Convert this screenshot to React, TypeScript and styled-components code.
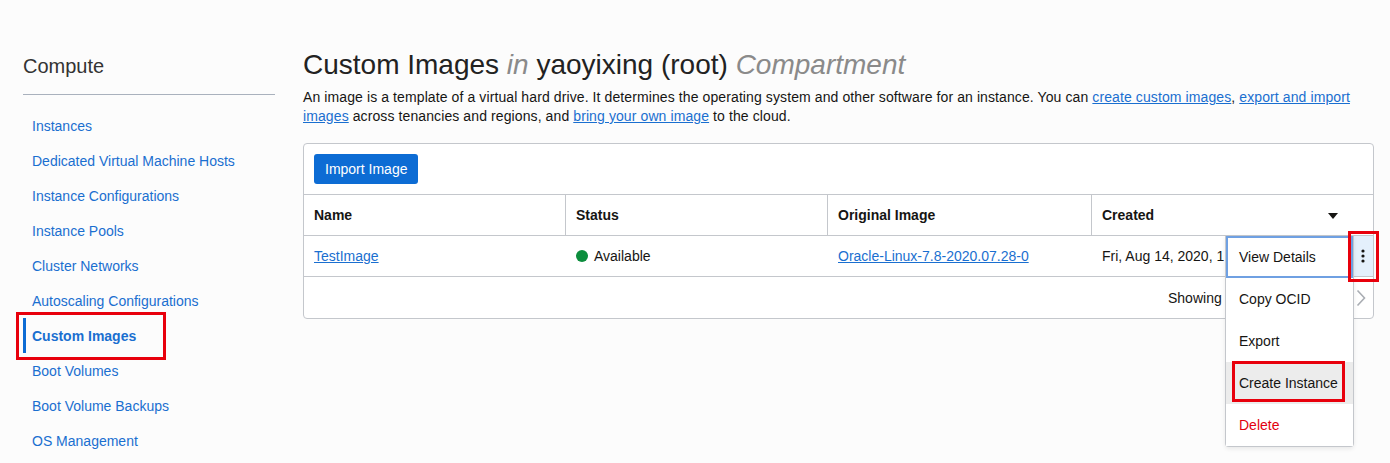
import React from 'react'
import styled, { createGlobalStyle } from 'styled-components'

const GlobalStyle = createGlobalStyle`
  html, body {
    margin: 0;
    padding: 0;
    background: #fcfcfc;
    font-family: "Liberation Sans", Arial, sans-serif;
    color: #161513;
  }
  * { box-sizing: border-box; }
`

const Page = styled.div`
  display: flex;
  width: 1390px;
  height: 463px;
  overflow: hidden;
  padding: 0 16px 0 23px;
`

const Sidebar = styled.nav`
  width: 252px;
  flex-shrink: 0;
  padding-top: 54px;
`

const SideTitle = styled.h2`
  margin: 0;
  font-size: 20px;
  line-height: 24px;
  font-weight: normal;
  color: #333;
  padding-bottom: 16px;
  border-bottom: 1px solid #a9b1bd;
`

const NavList = styled.ul`
  list-style: none;
  margin: 0;
  padding: 13px 0 0;
`

const NavItem = styled.li<{ $active?: boolean }>`
  position: relative;
  height: 35px;
  display: flex;
  align-items: center;
  padding-left: ${(p) => (p.$active ? '6px' : '9px')};
  border-left: ${(p) => (p.$active ? '3px solid #0d6cd4' : 'none')};
  font-size: 14px;
  font-weight: ${(p) => (p.$active ? 'bold' : 'normal')};
  color: #1a6fd0;
`

const Highlight = styled.span<{ $l: number; $t: number; $w: number; $h: number }>`
  position: absolute;
  left: ${(p) => p.$l}px;
  top: ${(p) => p.$t}px;
  width: ${(p) => p.$w}px;
  height: ${(p) => p.$h}px;
  border: 3px solid #e8000c;
  pointer-events: none;
  z-index: 5;
`

const Main = styled.main`
  flex: 1;
  padding-left: 28px;
  padding-top: 48px;
`

const Title = styled.h1`
  margin: 0;
  font-size: 28px;
  line-height: 34px;
  font-weight: normal;
  color: #222;
  white-space: nowrap;

  em {
    color: #8a8a8a;
  }
`

const Description = styled.p`
  margin: 6px 0 0;
  font-size: 14px;
  line-height: 19px;
  color: #161513;
  white-space: nowrap;
  letter-spacing: 0.1px;
`

const Link = styled.a`
  color: #1a6fd0;
  text-decoration: underline;
  cursor: pointer;
`

const Panel = styled.section`
  position: relative;
  margin-top: 17px;
  background: #fff;
  border: 1px solid #c4c7cc;
  border-radius: 4px;
`

const Toolbar = styled.div`
  padding: 10px;
  border-bottom: 1px solid #c4c7cc;
`

const PrimaryButton = styled.button`
  height: 30px;
  padding: 0 11px;
  border: none;
  border-radius: 3px;
  background: #0d6cd4;
  color: #fff;
  font-family: inherit;
  font-size: 14px;
`

const Row = styled.div<{ $header?: boolean }>`
  display: grid;
  grid-template-columns: 262px 262px 264px 1fr;
  height: 41px;
  border-bottom: 1px solid #c4c7cc;
  font-size: 14px;
  font-weight: ${(p) => (p.$header ? 'bold' : 'normal')};
`

const Cell = styled.div<{ $divider?: boolean; $overlay?: boolean }>`
  position: relative;
  display: flex;
  align-items: center;
  padding-left: 10px;
  border-right: ${(p) => (p.$divider ? '1px solid #c4c7cc' : 'none')};
  white-space: nowrap;
  overflow: ${(p) => (p.$overlay ? 'visible' : 'hidden')};
`

const Clipped = styled.span<{ $w: number }>`
  display: inline-block;
  max-width: ${(p) => p.$w}px;
  overflow: hidden;
  white-space: nowrap;
`

const SortArrow = styled.span`
  position: absolute;
  right: 35px;
  top: 18px;
  border-left: 5px solid transparent;
  border-right: 5px solid transparent;
  border-top: 6px solid #161513;
`

const StatusDot = styled.span`
  width: 12px;
  height: 12px;
  border-radius: 50%;
  background: #0c8d3d;
  margin-right: 6px;
`

const KebabButton = styled.button`
  position: absolute;
  right: 0;
  top: 0;
  width: 21px;
  height: 40px;
  border: none;
  background: #e4f0fc;
  display: flex;
  align-items: center;
  justify-content: center;
  padding: 0;
`

const Footer = styled.div`
  display: flex;
  align-items: center;
  height: 41px;
  font-size: 14px;
  padding-left: 864px;
`

const Pager = styled.span`
  display: flex;
  align-items: center;
  margin-left: auto;
  padding-right: 7px;
`

const Menu = styled.ul`
  position: absolute;
  left: 921px;
  top: 92px;
  width: 129px;
  margin: 0;
  padding: 0;
  list-style: none;
  background: #fff;
  border: 1px solid #c4c7cc;
  border-top: none;
  border-radius: 0 0 4px 4px;
  box-shadow: 0 2px 4px rgba(0, 0, 0, 0.08);
  z-index: 4;
`

const MenuItem = styled.li<{ $focused?: boolean; $hover?: boolean; $danger?: boolean }>`
  position: relative;
  height: 42px;
  display: flex;
  align-items: center;
  padding-left: ${(p) => (p.$focused ? '11px' : '13px')};
  font-size: 14px;
  color: ${(p) => (p.$danger ? '#e2000f' : '#161513')};
  background: ${(p) => (p.$hover ? '#ececec' : '#fff')};
  border: ${(p) => (p.$focused ? '2px solid #6fa0e2' : 'none')};
  white-space: nowrap;
`

const navItems = [
  'Instances',
  'Dedicated Virtual Machine Hosts',
  'Instance Configurations',
  'Instance Pools',
  'Cluster Networks',
  'Autoscaling Configurations',
  'Custom Images',
  'Boot Volumes',
  'Boot Volume Backups',
  'OS Management',
]

const Kebab = () => (
  <svg width="4" height="14" viewBox="0 0 4 14">
    <circle cx="2" cy="2" r="1.6" fill="#161513" />
    <circle cx="2" cy="7" r="1.6" fill="#161513" />
    <circle cx="2" cy="12" r="1.6" fill="#161513" />
  </svg>
)

const Chevron = () => (
  <svg width="10" height="18" viewBox="0 0 10 18">
    <path d="M1.5 1.5 L8.5 9 L1.5 16.5" fill="none" stroke="#a9adb3" strokeWidth="1.6" />
  </svg>
)

const App: React.FC = () => {
  return (
    <>
      <GlobalStyle />
      <Page>
        <Sidebar>
          <SideTitle>Compute</SideTitle>
          <NavList>
            {navItems.map((item) => {
              const active = item === 'Custom Images'
              return (
                <NavItem key={item} $active={active}>
                  {item}
                  {active && <Highlight $l={-10} $t={-6} $w={150} $h={48} />}
                </NavItem>
              )
            })}
          </NavList>
        </Sidebar>
        <Main>
          <Title>
            Custom Images <em>in</em> yaoyixing (root) <em>Compartment</em>
          </Title>
          <Description>
            An image is a template of a virtual hard drive. It determines the operating system and other software for an
            instance. You can <Link>create custom images</Link>, <Link>export and import</Link>
            <br />
            <Link>images</Link> across tenancies and regions, and <Link>bring your own image</Link> to the cloud.
          </Description>
          <Panel>
            <Toolbar>
              <PrimaryButton>Import Image</PrimaryButton>
            </Toolbar>
            <Row $header>
              <Cell $divider>Name</Cell>
              <Cell $divider>Status</Cell>
              <Cell $divider>Original Image</Cell>
              <Cell>
                Created
                <SortArrow />
              </Cell>
            </Row>
            <Row>
              <Cell>
                <Link>TestImage</Link>
              </Cell>
              <Cell>
                <StatusDot />
                Available
              </Cell>
              <Cell>
                <Link>Oracle-Linux-7.8-2020.07.28-0</Link>
              </Cell>
              <Cell $overlay>
                <Clipped $w={122}>Fri, Aug 14, 2020, 14:12:36 UTC</Clipped>
                <KebabButton>
                  <Kebab />
                  <Highlight $l={-4} $t={-5} $w={31} $h={51} />
                </KebabButton>
              </Cell>
            </Row>
            <Footer>
              <Clipped $w={56}>Showing 1 Item</Clipped>
              <Pager>
                <Chevron />
              </Pager>
            </Footer>
            <Menu>
              <MenuItem $focused>View Details</MenuItem>
              <MenuItem>Copy OCID</MenuItem>
              <MenuItem>Export</MenuItem>
              <MenuItem $hover>
                Create Instance
                <Highlight $l={6} $t={-1} $w={113} $h={41} />
              </MenuItem>
              <MenuItem $danger>Delete</MenuItem>
            </Menu>
          </Panel>
        </Main>
      </Page>
    </>
  )
}

export default App
